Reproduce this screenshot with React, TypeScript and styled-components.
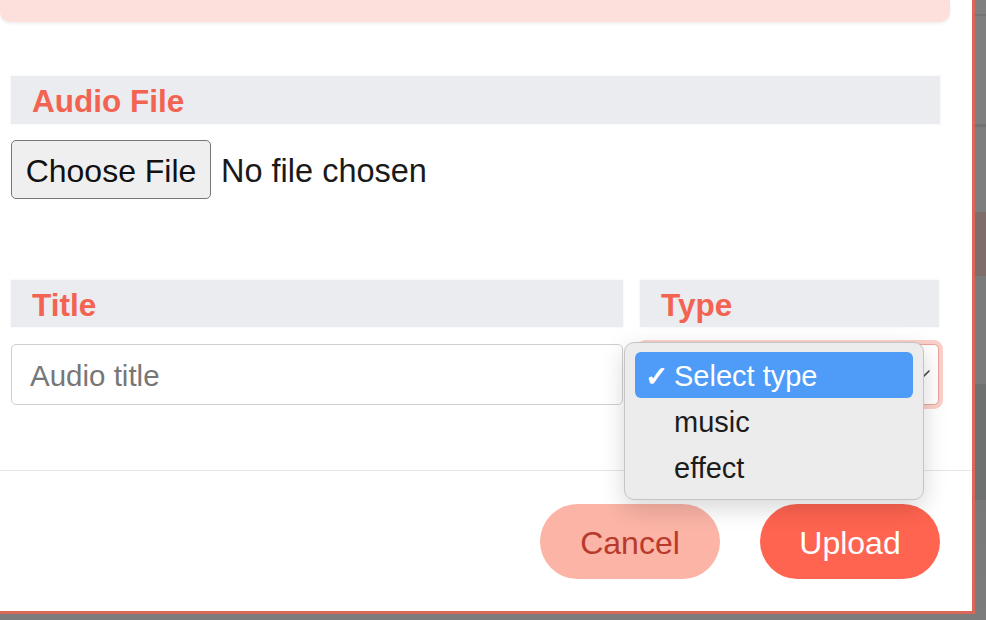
import React from "react";
import styled, { createGlobalStyle } from "styled-components";

const typeOptions = ["Select type", "music", "effect"];

const GlobalStyle = createGlobalStyle`
  html, body { margin: 0; padding: 0; }
  body { font-family: "Liberation Sans", Arial, sans-serif; }
  * { box-sizing: border-box; }
`;

export default function App() {
  return (
    <>
      <GlobalStyle />
      <Backdrop>
        <Modal>
          <Notice />
          <Body>
            <FieldLabel>Audio File</FieldLabel>
            <FileRow>
              <FileButton type="button">Choose File</FileButton>
              <FileName>No file chosen</FileName>
            </FileRow>

            <FieldGrid>
              <FieldLabel>Title</FieldLabel>
              <FieldLabel>Type</FieldLabel>
              <TextInput placeholder="Audio title" />
              <SelectWrap>
                <TypeSelect defaultValue="">
                  <option value="">Select type</option>
                  <option value="music">music</option>
                  <option value="effect">effect</option>
                </TypeSelect>
                <Chevron width="16" height="10" viewBox="0 0 16 10">
                  <path d="M2 2l6 6 6-6" fill="none" stroke="#444" strokeWidth="1.6" strokeLinecap="round" strokeLinejoin="round" />
                </Chevron>
                <OptionMenu>
                  {typeOptions.map((o, i) => (
                    <OptionItem key={o} $active={i === 0}>
                      <Check>{i === 0 ? "✓" : ""}</Check>
                      {o}
                    </OptionItem>
                  ))}
                </OptionMenu>
              </SelectWrap>
            </FieldGrid>
          </Body>
          <Footer>
            <PillButton $variant="soft">Cancel</PillButton>
            <PillButton $variant="solid">Upload</PillButton>
          </Footer>
        </Modal>
      </Backdrop>
    </>
  );
}

// dimmed page behind the dialog
const Backdrop = styled.div`
  position: fixed;
  inset: 0;
  display: flex;
  align-items: flex-start;
  background: linear-gradient(
    to bottom,
    #808080 0, #808080 14px, #747474 14px, #747474 16px,
    #7f7f7f 16px, #7f7f7f 124px, #737373 124px, #737373 127px,
    #7e7e7e 127px, #7e7e7e 212px, #7f6d6b 212px, #7f6d6b 276px,
    #7b7b7b 276px, #7b7b7b 384px, #6f7070 384px, #6f7070 500px,
    #787878 500px, #7c7c7c 100%
  );
`;

const Modal = styled.div`
  width: 975px;
  height: 614px;
  background: #fff;
  border-right: 3px solid #d9685b;
  border-bottom: 3px solid #d9685b;
  display: flex;
  flex-direction: column;
`;

const Notice = styled.div`
  width: 950px;
  height: 22px;
  background: #fde0db;
  border-radius: 0 0 10px 10px;
  box-shadow: 0 2px 3px rgba(0, 0, 0, 0.06);
`;

const Body = styled.div`
  padding: 54px 32px 0 11px;
  flex: 1;
`;

const FieldLabel = styled.div`
  height: 48px;
  display: flex;
  align-items: center;
  padding: 3px 0 0 21px;
  background: #ebecef;
  box-shadow: 0 0 2px rgba(235, 236, 239, 0.9);
  color: #f36351;
  font-weight: 700;
  font-size: 31.5px;
`;

const FileRow = styled.div`
  display: flex;
  align-items: center;
  margin-top: 16px;
`;

const FileButton = styled.button`
  width: 200px;
  height: 59px;
  background: #efefef;
  border: 1px solid #767676;
  border-radius: 5px;
  font-family: "Liberation Sans", Arial, sans-serif;
  font-size: 32px;
  color: #111;
  padding: 4px 0 0;
`;

const FileName = styled.span`
  margin: 4px 0 0 10px;
  font-size: 32.5px;
  color: #1a1a1a;
`;

const FieldGrid = styled.div`
  display: grid;
  grid-template-columns: 612px 299px;
  column-gap: 17px;
  row-gap: 17px;
  margin-top: 81px;
  & > ${FieldLabel} { height: 47px; }
`;

const TextInput = styled.input`
  height: 61px;
  border: 1px solid #cfcfcf;
  border-radius: 5px;
  padding: 3px 18px 0;
  font-family: "Liberation Sans", Arial, sans-serif;
  font-size: 29.5px;
  color: #222;
  outline: none;
  &::placeholder { color: #777; }
`;

const SelectWrap = styled.div`
  position: relative;
  height: 61px;
`;

const TypeSelect = styled.select`
  appearance: none;
  width: 100%;
  height: 100%;
  background: #fff;
  border: 1px solid #e7a59c;
  border-radius: 5px;
  box-shadow: 0 0 0 4px #fbd0ca;
  padding: 0 18px;
  font-family: "Liberation Sans", Arial, sans-serif;
  font-size: 29px;
  color: #222;
  outline: none;
`;

const Chevron = styled.svg`
  position: absolute;
  right: 8px;
  top: 25px;
  pointer-events: none;
`;

const OptionMenu = styled.ul`
  position: absolute;
  left: -16px;
  top: -2px;
  width: 300px;
  height: 158px;
  margin: 0;
  padding: 9px 10px;
  list-style: none;
  background: #ececec;
  border: 1px solid #c4c4c4;
  border-radius: 10px;
  box-shadow: 0 8px 24px rgba(0, 0, 0, 0.16);
`;

const OptionItem = styled.li<{ $active?: boolean }>`
  height: 46px;
  display: flex;
  align-items: center;
  padding: 3px 0 0 10px;
  border-radius: 6px;
  font-size: 29px;
  background: ${({ $active }) => ($active ? "#4e9bf8" : "transparent")};
  color: ${({ $active }) => ($active ? "#fff" : "#1c1c1c")};
`;

const Check = styled.span`
  width: 29px;
  font-size: 28px;
  font-weight: 700;
`;

const Footer = styled.div`
  border-top: 1px solid #e6e6e6;
  display: flex;
  justify-content: flex-end;
  gap: 40px;
  padding: 33px 32px 32px 0;
`;

const PillButton = styled.button<{ $variant: "soft" | "solid" }>`
  width: 180px;
  height: 75px;
  border: none;
  border-radius: 38px;
  padding: 4px 0 0;
  font-family: "Liberation Sans", Arial, sans-serif;
  font-size: 32px;
  background: ${({ $variant }) => ($variant === "solid" ? "#fe6450" : "#fbb4a6")};
  color: ${({ $variant }) => ($variant === "solid" ? "#fff" : "#b83a2d")};
`;
